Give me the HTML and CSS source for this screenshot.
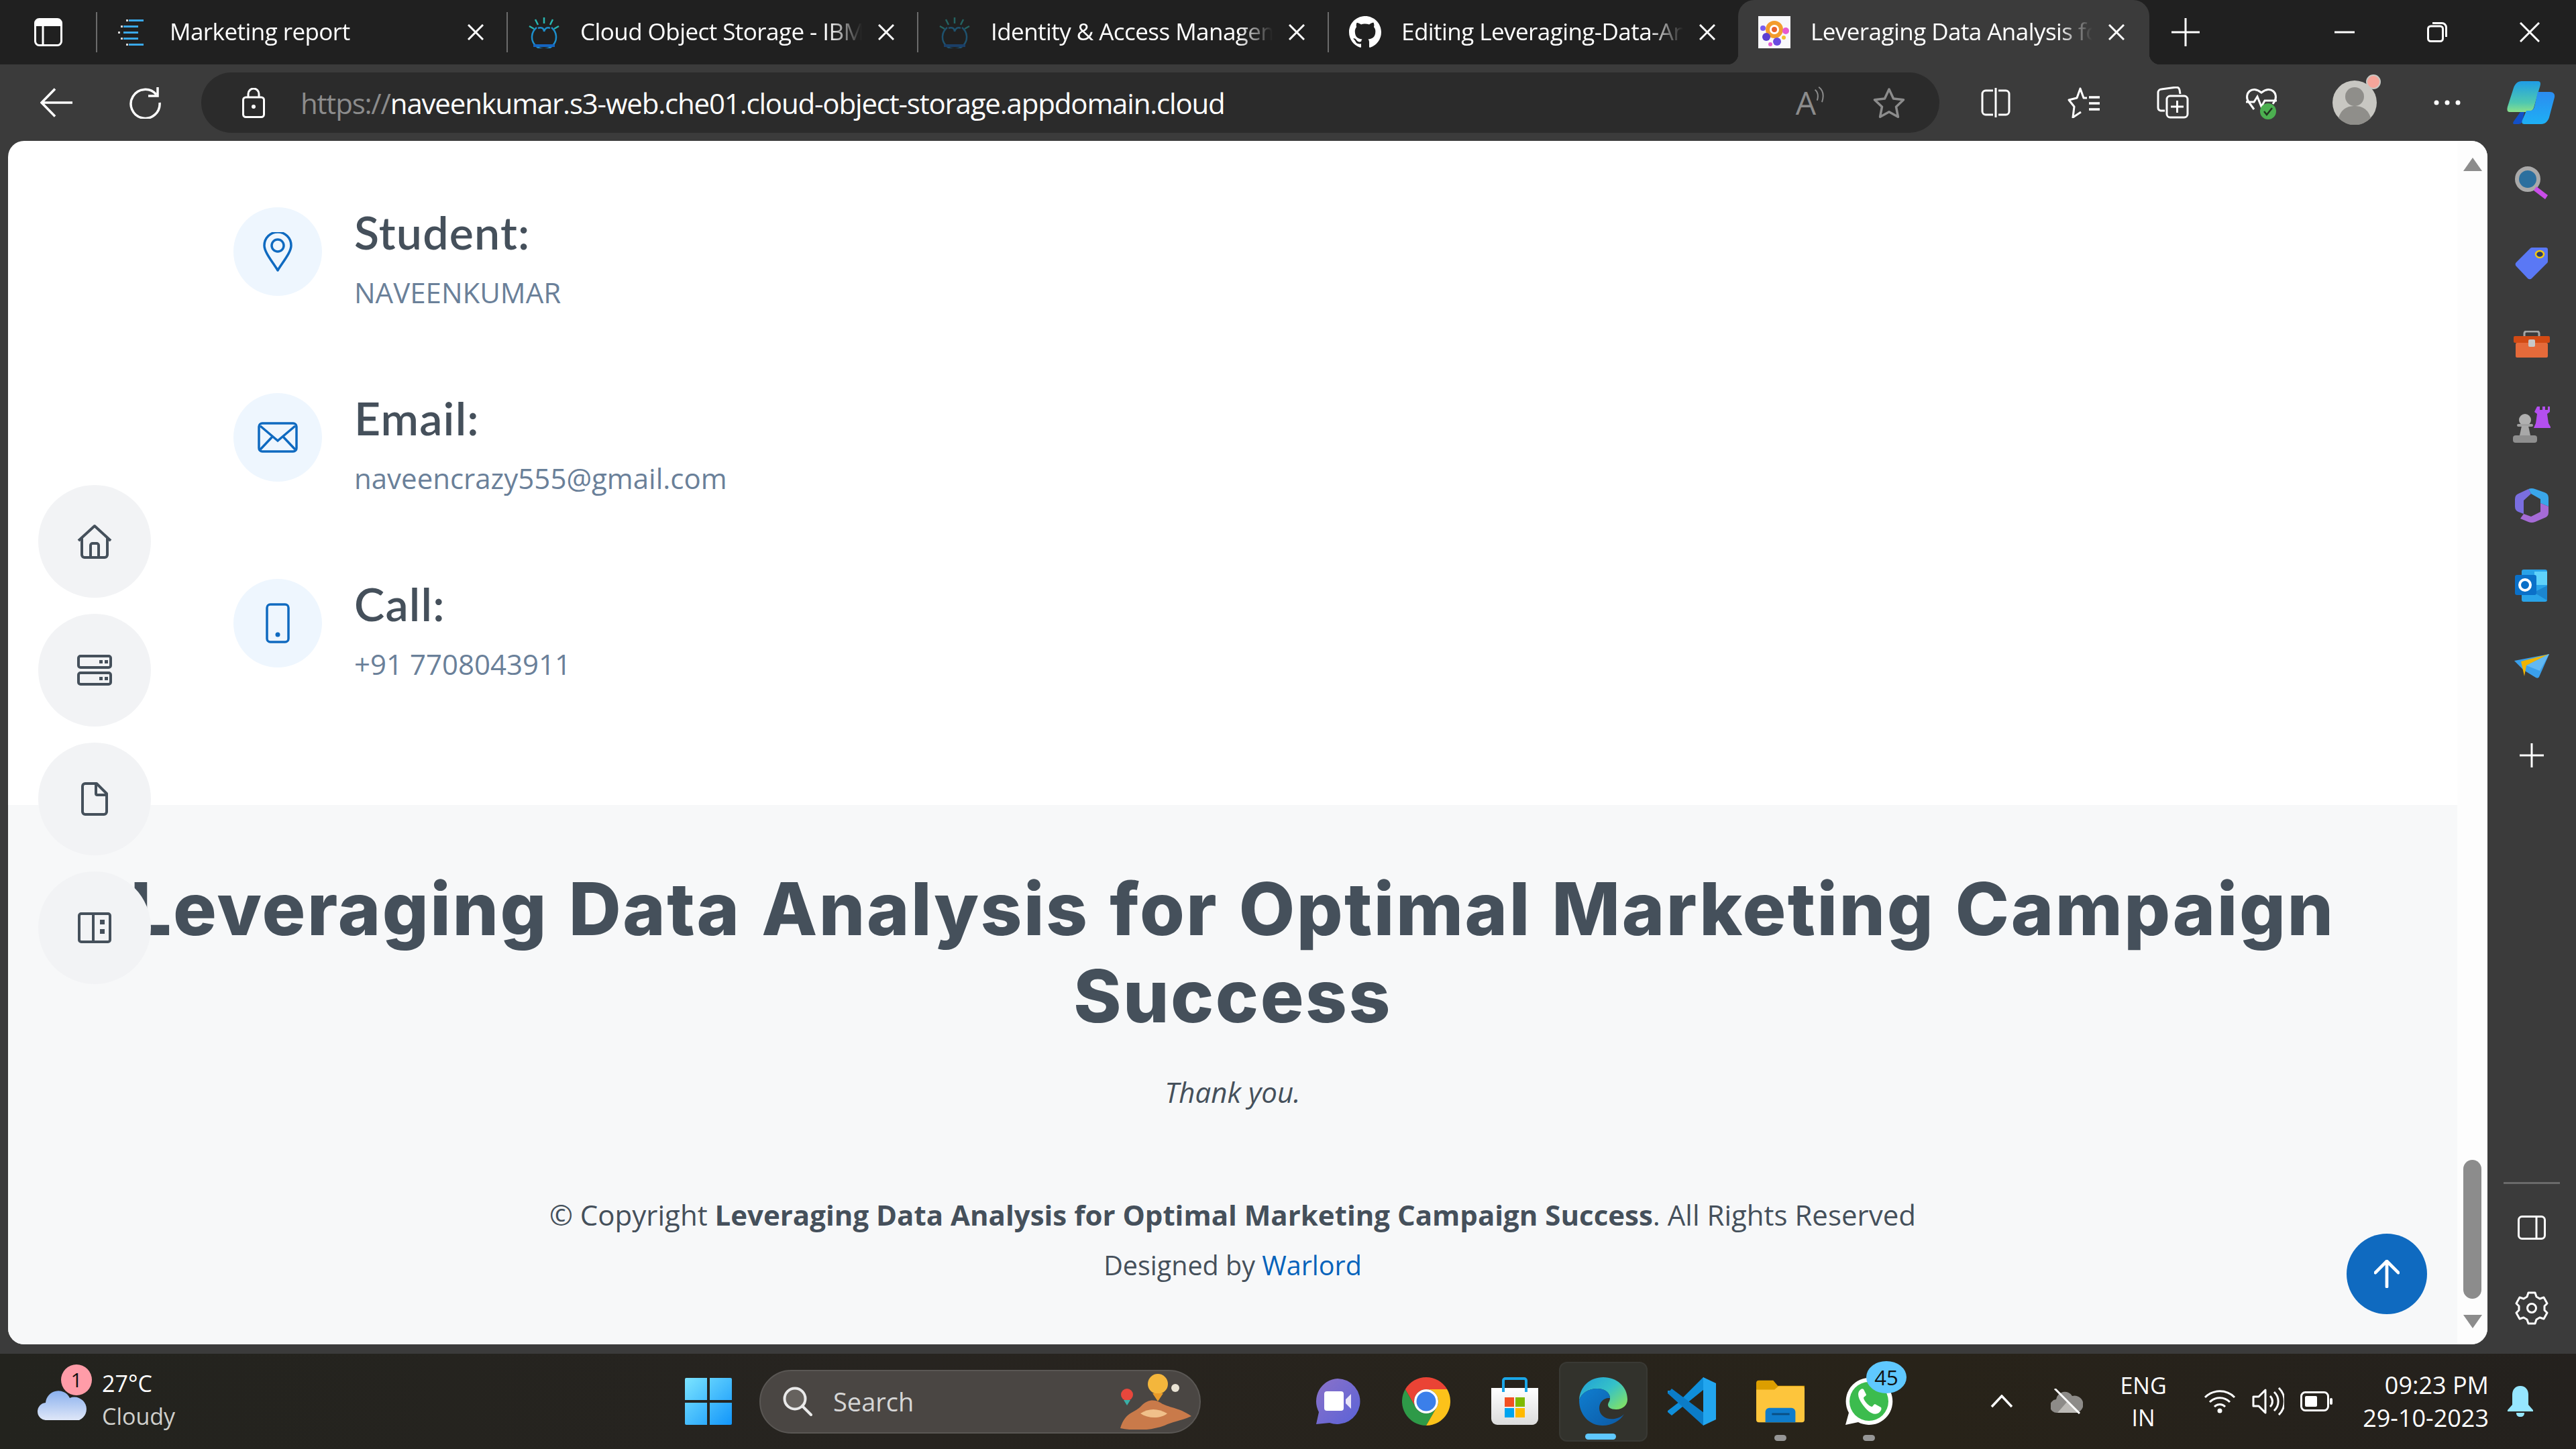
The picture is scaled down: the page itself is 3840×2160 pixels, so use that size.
FILE: index.html
```html
<!DOCTYPE html>
<html>
<head>
  <meta charset="utf-8">
  <title>Leveraging Data Analysis</title>
  <link rel="stylesheet" href="styles.css">
</head>
<body>
<div class="screen">

  <!-- tab strip -->
  <div class="tabbar">
    <div class="tabs-btn">
      <svg class="ic-tabs" viewBox="0 0 42 42"><rect x="1.500" y="1.500" width="39" height="39" rx="6" fill="none" stroke="#fff" stroke-width="3"/><path d="M1.500 8a6 6 0 0 1 6-6.500h27a6 6 0 0 1 6 6.500v4h-39z" fill="#fff"/><path d="M13 12v28" stroke="#fff" stroke-width="3"/></svg>
    </div>
    <div class="tab-sep"></div>
    <div class="tab">
      <svg class="favicon" viewBox="0 0 48 48"><g fill="#3aa8e8"><rect x="17" y="5" width="22" height="3"/><rect x="9" y="14" width="22" height="3"/><rect x="9" y="23" width="22" height="3"/><rect x="9" y="32" width="22" height="3"/><rect x="17" y="41" width="22" height="3"/></g><g fill="#d8d8d8"><rect x="13" y="5" width="3" height="3"/><rect x="5" y="14" width="3" height="3"/><rect x="1" y="23" width="3" height="3"/><rect x="5" y="32" width="3" height="3"/><rect x="13" y="41" width="3" height="3"/></g></svg>
      <span class="tab-title">Marketing report</span>
      <svg class="tab-x" viewBox="0 0 24 24"><path d="M1 1l22 22M23 1L1 23" stroke="#fff" stroke-width="3"/></svg>
    </div>
    <div class="tab-sep"></div>
    <div class="tab">
      <svg class="favicon" viewBox="0 0 48 48"><path d="M13 17a18 18 0 1 0 22 0" fill="none" stroke="#1d8ecb" stroke-width="2.500"/><path d="M15 18c5-2 9 0 9 5 1-5 5-7 9-5" fill="none" stroke="#1d8ecb" stroke-width="2.500"/><path d="M24 2v9M11 5l4 8M37 5l-4 8M2 15l7 4M46 15l-7 4" stroke="#29b6b0" stroke-width="2.500"/><path d="M8 44h32" stroke="#1565c0" stroke-width="4"/></svg>
      <span class="tab-title">Cloud Object Storage - IBM Cloud</span>
      <svg class="tab-x" viewBox="0 0 24 24"><path d="M1 1l22 22M23 1L1 23" stroke="#fff" stroke-width="3"/></svg>
    </div>
    <div class="tab-sep"></div>
    <div class="tab">
      <svg class="favicon dim" viewBox="0 0 48 48"><path d="M13 17a18 18 0 1 0 22 0" fill="none" stroke="#1d8ecb" stroke-width="2.500"/><path d="M15 18c5-2 9 0 9 5 1-5 5-7 9-5" fill="none" stroke="#1d8ecb" stroke-width="2.500"/><path d="M24 2v9M11 5l4 8M37 5l-4 8M2 15l7 4M46 15l-7 4" stroke="#29b6b0" stroke-width="2.500"/><path d="M8 44h32" stroke="#1565c0" stroke-width="4"/></svg>
      <span class="tab-title">Identity &amp; Access Management</span>
      <svg class="tab-x" viewBox="0 0 24 24"><path d="M1 1l22 22M23 1L1 23" stroke="#fff" stroke-width="3"/></svg>
    </div>
    <div class="tab-sep"></div>
    <div class="tab">
      <svg class="favicon" viewBox="0 0 16 16"><path fill="#fff" d="M8 0C3.580 0 0 3.580 0 8c0 3.540 2.290 6.530 5.470 7.590.4.070.55-.17.55-.38 0-.19-.01-.82-.01-1.490-2.010.37-2.530-.49-2.690-.94-.09-.23-.48-.94-.82-1.130-.28-.15-.68-.52-.01-.53.63-.01 1.080.58 1.230.82.72 1.210 1.870.87 2.330.66.07-.52.28-.87.51-1.070-1.780-.2-3.640-.89-3.640-3.950 0-.87.31-1.590.82-2.150-.08-.2-.36-1.020.08-2.120 0 0 .67-.21 2.200.82.64-.18 1.320-.27 2-.27.68 0 1.360.09 2 .27 1.530-1.040 2.200-.82 2.200-.82.44 1.100.16 1.920.08 2.120.51.56.82 1.270.82 2.150 0 3.070-1.870 3.750-3.650 3.950.29.25.54.73.54 1.480 0 1.070-.01 1.930-.01 2.200 0 .21.15.46.55.38A8.013 8.013 0 0 0 16 8c0-4.420-3.580-8-8-8z"/></svg>
      <span class="tab-title">Editing Leveraging-Data-Analysis</span>
      <svg class="tab-x" viewBox="0 0 24 24"><path d="M1 1l22 22M23 1L1 23" stroke="#fff" stroke-width="3"/></svg>
    </div>
    <div class="tab tab-active">
      <svg class="favicon" viewBox="0 0 48 48"><rect width="48" height="48" fill="#f8f8fb"/><circle cx="24" cy="20" r="13" fill="#f39c2d"/><circle cx="24" cy="20" r="7" fill="#fff"/><circle cx="24" cy="20" r="4" fill="#e8612c"/><circle cx="12" cy="31" r="6" fill="#5b3fd1"/><circle cx="28" cy="38" r="6" fill="#6a4be0"/><circle cx="41" cy="22" r="5" fill="#e65ad0"/><circle cx="7" cy="18" r="4" fill="#7a5cf0"/><circle cx="38" cy="32" r="3" fill="#f2c12e"/><circle cx="18" cy="42" r="3" fill="#e65ad0"/></svg>
      <span class="tab-title">Leveraging Data Analysis for Optimal</span>
      <svg class="tab-x" viewBox="0 0 24 24"><path d="M1 1l22 22M23 1L1 23" stroke="#fff" stroke-width="3"/></svg>
    </div>
    <div class="newtab">
      <svg class="ic-plus" viewBox="0 0 42 42"><path d="M0 21h42M21 0v42" stroke="#fff" stroke-width="3"/></svg>
    </div>
    <div class="winctl">
      <div class="winbtn"><svg class="ic-min" viewBox="0 0 30 4"><path d="M0 2h30" stroke="#fff" stroke-width="3"/></svg></div>
      <div class="winbtn"><svg class="ic-restore" viewBox="0 0 30 30"><rect x="1.500" y="6" width="22" height="22.500" rx="4" fill="none" stroke="#fff" stroke-width="3"/><path d="M8 1.500h14a6.500 6.500 0 0 1 6.500 6.500v14" fill="none" stroke="#fff" stroke-width="3"/></svg></div>
      <div class="winbtn"><svg class="ic-close" viewBox="0 0 30 30"><path d="M1 1l28 28M29 1L1 29" stroke="#fff" stroke-width="3"/></svg></div>
    </div>
  </div>

  <!-- address bar row -->
  <div class="toolbar">
    <div class="tool">
      <svg class="ic-back" viewBox="0 0 48 44"><path d="M22 1.500L2 22l20 20.500M2 22h46" fill="none" stroke="#fff" stroke-width="3.500"/></svg>
    </div>
    <div class="tool">
      <svg class="ic-refresh" viewBox="0 0 48 48"><path d="M41 12A21.500 21.500 0 1 0 46 24" fill="none" stroke="#fff" stroke-width="3.500"/><path d="M43 1v13H29" fill="none" stroke="#fff" stroke-width="3.500"/></svg>
    </div>
    <div class="address">
      <svg class="ic-lock" viewBox="0 0 34 45"><rect x="1.500" y="14" width="31" height="29.500" rx="4" fill="none" stroke="#fff" stroke-width="3"/><path d="M9 14V9a8 8 0 0 1 16 0v5" fill="none" stroke="#fff" stroke-width="3"/><circle cx="17" cy="28" r="3" fill="#fff"/></svg>
      <span class="url"><span class="url-scheme">https://</span>naveenkumar.s3-web.che01.cloud-object-storage.appdomain.cloud</span>
      <div class="address-right">
        <span class="read-aloud">A<svg class="ic-waves" viewBox="0 0 20 30"><path d="M2 6c5 4 7 10 4 20M9 1c8 6 10 16 6 28" fill="none" stroke="#8c8c8c" stroke-width="2.500"/></svg></span>
        <svg class="ic-star" viewBox="0 0 48 46"><path d="M24 3l6.500 14 15 1.800-11 10.400 2.900 15L24 36.800 10.600 44.200l2.900-15-11-10.400 15-1.800z" fill="none" stroke="#8c8c8c" stroke-width="3.500" stroke-linejoin="round"/></svg>
      </div>
    </div>
    <div class="tool">
      <svg class="ic-split" viewBox="0 0 44 44"><path d="M18 4H7a5 5 0 0 0-5 5v26a5 5 0 0 0 5 5h11M26 4h11a5 5 0 0 1 5 5v26a5 5 0 0 1-5 5H26" fill="none" stroke="#fff" stroke-width="3"/><path d="M22 0v44" stroke="#fff" stroke-width="3"/></svg>
    </div>
    <div class="tool">
      <svg class="ic-favs" viewBox="0 0 50 46"><path d="M29 16h-5L19 2l-5 14L2 19l8 10-2 16 12-8" fill="none" stroke="#fff" stroke-width="3" stroke-linejoin="round"/><path d="M32 15h16M32 24h16M32 33h16" stroke="#fff" stroke-width="3.500"/></svg>
    </div>
    <div class="tool">
      <svg class="ic-coll" viewBox="0 0 48 48"><path d="M12 36l-6 0a5 5 0 0 1-4-5V9a5 5 0 0 1 5-5l22-3a5 5 0 0 1 5 4l1 6" fill="none" stroke="#fff" stroke-width="3"/><rect x="15" y="14" width="31" height="32" rx="5" fill="#3b3b3b" stroke="#fff" stroke-width="3"/><path d="M30.500 21v18M21 30h19" stroke="#fff" stroke-width="3"/></svg>
    </div>
    <div class="tool">
      <svg class="ic-health" viewBox="0 0 48 50"><path d="M13 35L5 24C-3 12 10-2 24 10c14-12 27 2 19 14l-2 3" fill="none" stroke="#fff" stroke-width="3"/><path d="M1 24h12l5-8 6 15 5-9h18" fill="none" stroke="#fff" stroke-width="3"/><circle cx="34" cy="38" r="12" fill="#4caf50"/><path d="M28 38l4 5 8-10" fill="none" stroke="#21331f" stroke-width="2.500"/></svg>
    </div>
    <div class="tool tool-profile">
      <svg class="ic-avatar" viewBox="0 0 66 66"><circle cx="33" cy="33" r="33" fill="#c8c7c2"/><circle cx="33" cy="24" r="14" fill="#8f8e8a"/><path d="M9 56c4-14 14-18 24-18s20 4 24 18a33 33 0 0 1-48 0z" fill="#8f8e8a"/></svg>
      <div class="avatar-dot"></div>
    </div>
    <div class="tool tool-dots">
      <svg class="ic-dots" viewBox="0 0 40 8"><circle cx="4" cy="4" r="3.500" fill="#fff"/><circle cx="20" cy="4" r="3.500" fill="#fff"/><circle cx="36" cy="4" r="3.500" fill="#fff"/></svg>
    </div>
    <div class="tool tool-copilot">
      <svg class="ic-copilot" viewBox="0 0 72 64">
        <defs>
          <linearGradient id="cpA" x1="0" y1="0" x2="0" y2="1"><stop offset="0" stop-color="#1e9de6"/><stop offset=".7" stop-color="#4fc8b0"/><stop offset="1" stop-color="#8be08a"/></linearGradient>
          <linearGradient id="cpB" x1="0" y1="0" x2="0" y2="1"><stop offset="0" stop-color="#2b8cf0"/><stop offset="1" stop-color="#1eb0f5"/></linearGradient>
        </defs>
        <path d="M22 0h24c6 0 4 6 2 12l-8 28c-2 4-6 6-10 6H4c-4 0-4-4-3-8l9-28C12 4 16 0 22 0z" fill="url(#cpA)"/>
        <path d="M20 46h6l-3 14c-1 3-3 4-7 4H12c-4 0-3-2-2-4z" fill="#1250c8"/>
        <path d="M46 16h18c5 0 8 3 7 8l-8 30c-2 6-6 10-12 10H26c-4 0-4-3-3-6l6-14h4c5 0 7-2 8-6z" fill="url(#cpB)"/>
      </svg>
    </div>
  </div>

  <!-- page plus edge sidebar -->
  <div class="middle">
    <div class="page">
      <div class="content">
        <section class="contact">
          <div class="info">
            <div class="info-icon">
              <svg class="ic-pin" viewBox="0 0 44 59"><path d="M22 57C14 44 2 30 2 20a20 20 0 0 1 40 0c0 10-12 24-20 37z" fill="none" stroke="#0f6ac0" stroke-width="3.500" stroke-linejoin="round"/><circle cx="22" cy="20" r="9" fill="none" stroke="#0f6ac0" stroke-width="3.500"/></svg>
            </div>
            <div class="info-text">
              <h4>Student:</h4>
              <p>NAVEENKUMAR</p>
            </div>
          </div>
          <div class="info">
            <div class="info-icon">
              <svg class="ic-mail" viewBox="0 0 60 46"><rect x="2" y="2" width="56" height="42" rx="5" fill="none" stroke="#0f6ac0" stroke-width="3.500"/><path d="M4 6l26 22L56 6M4 41l18-19M56 41L38 22" fill="none" stroke="#0f6ac0" stroke-width="3.500"/></svg>
            </div>
            <div class="info-text">
              <h4>Email:</h4>
              <p>naveencrazy555@gmail.com</p>
            </div>
          </div>
          <div class="info">
            <div class="info-icon">
              <svg class="ic-phone" viewBox="0 0 36 60"><rect x="2" y="2" width="32" height="56" rx="5" fill="none" stroke="#0f6ac0" stroke-width="3.500"/><circle cx="18" cy="47" r="3.500" fill="#0f6ac0"/></svg>
            </div>
            <div class="info-text">
              <h4>Call:</h4>
              <p>+91 7708043911</p>
            </div>
          </div>
        </section>

        <footer class="footer">
          <h3>Leveraging Data Analysis for Optimal Marketing Campaign Success</h3>
          <p class="thanks">Thank you.</p>
          <div class="copyright">© Copyright <strong>Leveraging Data Analysis for Optimal Marketing Campaign Success</strong>. All Rights Reserved</div>
          <div class="credits">Designed by <a href="#">Warlord</a></div>
        </footer>

        <nav class="sidenav">
          <a class="nav-btn"><svg class="ic-home" viewBox="0 0 52 52"><path d="M2 25L26 3l24 22M7 21v25a4 4 0 0 0 4 4h30a4 4 0 0 0 4-4V21" fill="none" stroke="#45505b" stroke-width="4" stroke-linejoin="round"/><path d="M20 50V32a3 3 0 0 1 3-3h6a3 3 0 0 1 3 3v18" fill="none" stroke="#45505b" stroke-width="4"/></svg></a>
          <a class="nav-btn"><svg class="ic-hdd" viewBox="0 0 52 46"><rect x="2" y="2" width="48" height="17" rx="3" fill="none" stroke="#45505b" stroke-width="4"/><rect x="2" y="27" width="48" height="17" rx="3" fill="none" stroke="#45505b" stroke-width="4"/><path d="M33 8h5v5h-5zM41 8h5v5h-5zM33 33h5v5h-5zM41 33h5v5h-5z" fill="#45505b"/></svg></a>
          <a class="nav-btn"><svg class="ic-doc" viewBox="0 0 40 50"><path d="M6 2h17l15 15v27a4 4 0 0 1-4 4H6a4 4 0 0 1-4-4V6a4 4 0 0 1 4-4z" fill="none" stroke="#45505b" stroke-width="4" stroke-linejoin="round"/><path d="M22 2v15a2 2 0 0 0 2 2h14" fill="none" stroke="#45505b" stroke-width="4"/></svg></a>
          <a class="nav-btn"><svg class="ic-book" viewBox="0 0 50 46"><rect x="2" y="2" width="46" height="42" rx="3" fill="none" stroke="#45505b" stroke-width="4"/><path d="M23 2v42" stroke="#45505b" stroke-width="4"/><path d="M33 11h7v7h-7zM33 25h7v7h-7z" fill="#45505b"/></svg></a>
        </nav>

        <a class="back-top"><svg class="ic-up" viewBox="0 0 40 44"><path d="M2 20L20 2l18 18M20 2v40" fill="none" stroke="#fff" stroke-width="5" stroke-linecap="round" stroke-linejoin="round"/></svg></a>
      </div>

      <div class="scrollbar">
        <div class="arrow-up"></div>
        <div class="thumb"></div>
        <div class="arrow-down"></div>
      </div>
    </div>

    <aside class="edgebar">
      <div class="edge-icon">
        <svg class="ic-s1" viewBox="0 0 52 52"><circle cx="20" cy="20" r="16" fill="#2b6f9e" stroke="#a9a9a9" stroke-width="6"/><path d="M33 31l17 13-4 6-17-13z" fill="#c94de8"/></svg>
      </div>
      <div class="edge-icon">
        <svg class="ic-s2" viewBox="0 0 50 50"><path d="M26 1h20a3 3 0 0 1 3 3v18a4 4 0 0 1-2 3L25 47a4 4 0 0 1-6 0L2 29a4 4 0 0 1 0-6L23 2a4 4 0 0 1 3-1z" fill="#5a78f5"/><ellipse cx="37" cy="11" rx="6" ry="5" fill="#2b3a66" stroke="#f2c812" stroke-width="2.500"/></svg>
      </div>
      <div class="edge-icon">
        <svg class="ic-s3" viewBox="0 0 54 40"><path d="M16 8V4a3 3 0 0 1 3-3h16a3 3 0 0 1 3 3v4" fill="none" stroke="#a5a5a5" stroke-width="3"/><rect x="0" y="8" width="54" height="10" rx="2" fill="#d24a14"/><rect x="3" y="18" width="48" height="22" rx="2" fill="#e56a3a"/><rect x="22" y="13" width="10" height="11" rx="2" fill="#c8c8c8"/></svg>
      </div>
      <div class="edge-icon">
        <svg class="ic-s4" viewBox="0 0 56 54"><path d="M37 0h4v5h4V0h4v5h4V0h3v8l-4 3 2 14 4 7H32l3-7 2-14-4-3z" fill="#b44ff0" transform="translate(-1 0)"/><circle cx="18" cy="20" r="9" fill="#b0b0b0"/><rect x="6" y="26" width="24" height="4" rx="2" fill="#a0a0a0"/><path d="M13 29h10l3 14H10z" fill="#a8a8a8"/><rect x="0" y="43" width="36" height="11" rx="4" fill="#8e8e8e"/></svg>
      </div>
      <div class="edge-icon">
        <svg class="ic-s5" viewBox="0 0 50 54">
          <path d="M20 3q5-2 10 0l14 5q6 2 6 8v13L38 24V18L24 10z" fill="#3aa6ea"/>
          <path d="M0 18q0-6 5-8L20 3l4 7-11 10v20L5 37q-5-2-5-8z" fill="#7a6ee0"/>
          <path d="M13 40l11 4 14-7V24l12 5v9q0 6-6 8L30 52q-5 2-10 0L8 47z" fill="#a56bd6"/>
          <ellipse cx="25" cy="28" rx="12" ry="13" fill="#3b3b3b"/>
        </svg>
      </div>
      <div class="edge-icon">
        <svg class="ic-s6" viewBox="0 0 50 48"><rect x="10" y="0" width="38" height="48" rx="3" fill="#29a3e8"/><rect x="29" y="3" width="19" height="20" fill="#5fd2fb"/><path d="M28 34L48 24v22z" fill="#1b86d0"/><rect x="0" y="8" width="32" height="30" rx="3" fill="#0a70c8"/><ellipse cx="15" cy="23" rx="8" ry="8" fill="none" stroke="#fff" stroke-width="4"/></svg>
      </div>
      <div class="edge-icon">
        <svg class="ic-s7" viewBox="0 0 52 36"><path d="M0 10l52-10-15 34c-1 2-3 2-5 1L14 24z" fill="#3aa0ec"/><path d="M10 11L52 0 18 17l-3 16z" fill="#f0b400"/><path d="M52 0L18 17l20 8z" fill="#62b8f2"/></svg>
      </div>
      <div class="edge-icon edge-add">
        <svg class="ic-plus2" viewBox="0 0 36 36"><path d="M0 18h36M18 0v36" stroke="#fff" stroke-width="3"/></svg>
      </div>
      <div class="edge-bottom">
        <div class="edge-line"></div>
        <div class="edge-tool">
          <svg class="ic-panel" viewBox="0 0 42 36"><rect x="1.500" y="1.500" width="39" height="33" rx="5" fill="none" stroke="#fff" stroke-width="3"/><path d="M28 1.500v33" stroke="#fff" stroke-width="3"/></svg>
        </div>
        <div class="edge-tool">
          <svg class="ic-gear" viewBox="0 0 50 50"><path d="M20 2h10l2 6 5 3 6-2 5 9-4 4v6l4 4-5 9-6-2-5 3-2 6H20l-2-6-5-3-6 2-5-9 4-4v-6l-4-4 5-9 6 2 5-3z" fill="none" stroke="#fff" stroke-width="3" stroke-linejoin="round"/><circle cx="25" cy="25" r="6.500" fill="none" stroke="#fff" stroke-width="3"/></svg>
        </div>
      </div>
    </aside>
  </div>

  <div class="winstrip"></div>

  <!-- windows taskbar -->
  <div class="taskbar">
    <div class="weather">
      <svg class="ic-cloud" viewBox="0 0 74 46">
        <defs><linearGradient id="cl" x1="0" y1="0" x2="0" y2="1"><stop offset="0" stop-color="#8ab0ee"/><stop offset="1" stop-color="#dfe7f8"/></linearGradient></defs>
        <path d="M14 46a13 13 0 0 1-2-26 19 19 0 0 1 36-7 17 17 0 0 1 14 33z" fill="url(#cl)"/>
      </svg>
      <span class="weather-badge">1</span>
      <div class="weather-text">
        <span class="temp">27°C</span>
        <span class="cond">Cloudy</span>
      </div>
    </div>

    <div class="win-logo">
      <svg class="ic-win" viewBox="0 0 70 70">
        <defs><linearGradient id="wn" x1="0" y1="0" x2="1" y2="1"><stop offset="0" stop-color="#7be4ff"/><stop offset="1" stop-color="#1296fa"/></linearGradient></defs>
        <path d="M2 0h31v33H0V2a2 2 0 0 1 2-2zM37 0h31a2 2 0 0 1 2 2v31H37zM0 37h33v33H2a2 2 0 0 1-2-2zM37 37h33v31a2 2 0 0 1-2 2H37z" fill="url(#wn)"/>
      </svg>
    </div>

    <div class="searchbox">
      <svg class="ic-search" viewBox="0 0 44 44"><circle cx="18" cy="18" r="15.500" fill="#66625e" stroke="#eaeaea" stroke-width="4"/><path d="M29 29l13 13" stroke="#eaeaea" stroke-width="4" stroke-linecap="round"/></svg>
      <span class="search-label">Search</span>
      <svg class="ic-doodle" viewBox="0 0 140 84">
        <path d="M30 82c8-26 22-22 32-34 8-8 18-10 28-4 12 8 26 6 46 20-18 8-28 8-40 14-22 8-46 8-66 4z" fill="#c97a4a"/>
        <path d="M60 60c12-8 26-8 40 0-10 8-28 8-40 0z" fill="#f0c08a"/>
        <circle cx="86" cy="16" r="15" fill="#f4b63c"/><path d="M78 30l8 12 8-12z" fill="#e89b2a"/>
        <circle cx="40" cy="32" r="9" fill="#e8473c"/><path d="M35 40l5 8 5-8z" fill="#38b0a8"/>
        <circle cx="112" cy="22" r="6" fill="#e9e3d4"/>
      </svg>
    </div>

    <div class="apps">
      <div class="app">
        <svg class="ic-app-meet" viewBox="0 0 68 68">
          <defs><linearGradient id="mt" x1="0" y1="0" x2="1" y2="1"><stop offset="0" stop-color="#8b72c8"/><stop offset="1" stop-color="#5a62d8"/></linearGradient></defs>
          <path d="M34 0a34 34 0 1 1-12 66L2 68l4-18A34 34 0 0 1 34 0z" fill="url(#mt)"/>
          <rect x="14" y="19" width="29" height="29" rx="4" fill="#fff"/><path d="M46 31l8-8v22l-8-8z" fill="#e8e4f8"/>
        </svg>
      </div>
      <div class="app">
        <svg class="ic-app" viewBox="0 0 72 72">
          <path d="M36 0a36 36 0 0 1 31.200 18H36a18 18 0 0 0-15.600 27L4.800 18A36 36 0 0 1 36 0z" fill="#ea4335"/>
          <path d="M4.800 18l15.600 27a18 18 0 0 0 31.200 0L36 72A36 36 0 0 1 4.800 18z" fill="#2e9a48"/>
          <path d="M67.200 18H36a18 18 0 0 1 15.600 27L36 72a36 36 0 0 0 31.200-54z" fill="#fcc21a"/>
          <circle cx="36" cy="36" r="18" fill="#fff"/><circle cx="36" cy="36" r="14.500" fill="#3b7fea"/>
        </svg>
      </div>
      <div class="app">
        <svg class="ic-app" viewBox="0 0 72 72">
          <defs><linearGradient id="st" x1="0" y1="0" x2="0" y2="1"><stop offset="0" stop-color="#ffffff"/><stop offset="1" stop-color="#dcdcdc"/></linearGradient></defs>
          <path d="M1 16h70v46a9 9 0 0 1-9 9H10a9 9 0 0 1-9-9z" fill="url(#st)"/>
          <path d="M19 22V5a3 3 0 0 1 3-3h28a3 3 0 0 1 3 3v17" fill="none" stroke="#1aa7e8" stroke-width="4"/>
          <rect x="21" y="30" width="14" height="14" fill="#f25022"/><rect x="37" y="30" width="14" height="14" fill="#7fba00"/><rect x="21" y="46" width="14" height="14" fill="#00a4ef"/><rect x="37" y="46" width="14" height="14" fill="#ffb900"/>
        </svg>
      </div>
      <div class="app app-active">
        <svg class="ic-app" viewBox="0 0 72 72">
          <defs>
            <linearGradient id="eg1" x1="0" y1="0" x2="1" y2=".8"><stop offset="0" stop-color="#1f9fd8"/><stop offset=".55" stop-color="#35c1c8"/><stop offset="1" stop-color="#7ee06a"/></linearGradient>
            <linearGradient id="eg2" x1="0" y1="0" x2="1" y2="1"><stop offset="0" stop-color="#0f7ed0"/><stop offset="1" stop-color="#0c59a4"/></linearGradient>
          </defs>
          <path d="M0 34C1 14 16 0 36 0c20 0 36 14 36 33 0 8-6 15-17 15-8 0-12-3-12-7 0-3 3-5 3-10 0-8-8-14-19-14C14 17 3 24 0 34z" fill="url(#eg1)"/>
          <path d="M0 34C3 24 14 17 27 17c11 0 19 6 19 14-9-1-16 6-16 15 0 11 10 18 23 16 5-1 10-3 14-7-6 10-18 17-32 17C15 72 0 56 0 34z" fill="url(#eg2)"/>
        </svg>
      </div>
      <div class="app">
        <svg class="ic-app" viewBox="0 0 72 72">
          <path d="M53 0L22 31 8 20l-8 0v4l17 13L0 50v2l6 5 52-42V4z" fill="#0f8fdb"/>
          <path d="M0 24l6-7 52 39v12l-5 4z" fill="#0b7cc8"/>
          <path d="M53 0l19 9v54l-19 9z" fill="#22a6ef"/>
        </svg>
      </div>
      <div class="app app-open">
        <svg class="ic-app" viewBox="0 0 74 64">
          <path d="M0 4a4 4 0 0 1 4-4h22l7 8h41v10H0z" fill="#dc9e00"/>
          <path d="M0 14h28l6-5h36a4 4 0 0 1 4 4v47a4 4 0 0 1-4 4H4a4 4 0 0 1-4-4z" fill="#fdc53c"/>
          <path d="M14 64V48a6 6 0 0 1 6-6h34a6 6 0 0 1 6 6v16z" fill="#0f7ccb"/><rect x="24" y="50" width="27" height="3" fill="#0a4f84"/>
        </svg>
      </div>
      <div class="app app-open">
        <svg class="ic-app" viewBox="0 0 72 72">
          <path d="M36 1a35 35 0 1 1-16 66L1 71l5-18A35 35 0 0 1 36 1z" fill="#fff"/>
          <circle cx="36" cy="36" r="29" fill="#3cbc4e"/>
          <path d="M24 18c-6 4-5 12 2 22s15 17 23 14c6-3 6-8 5-9l-9-5c-2 0-3 4-5 4-4-1-11-8-12-13 0-2 4-3 4-5l-4-8c-1-1-3-1-4 0z" fill="#fff"/>
        </svg>
        <span class="wa-badge">45</span>
      </div>
    </div>

    <div class="tray">
      <svg class="ic-chev" viewBox="0 0 34 20"><path d="M2 18L17 2l15 16" fill="none" stroke="#fff" stroke-width="3.500"/></svg>
      <svg class="ic-od" viewBox="0 0 48 38"><path d="M10 36a10 10 0 0 1-2-20 13 13 0 0 1 24-5 11 11 0 0 1 7 25z" fill="#8d8b88"/><path d="M10 36l14-16 18 16z" fill="#bcbab6"/><path d="M6 0l37 37" stroke="#fff" stroke-width="3"/></svg>
      <div class="lang"><span>ENG</span><span>IN</span></div>
      <svg class="ic-wifi" viewBox="0 0 48 36"><path d="M2 12a31 31 0 0 1 44 0M9 19a21 21 0 0 1 30 0M16 26a11 11 0 0 1 16 0" fill="none" stroke="#fff" stroke-width="3"/><circle cx="24" cy="32" r="3.500" fill="#fff"/></svg>
      <svg class="ic-vol" viewBox="0 0 48 42"><path d="M2 14h8L20 4v34L10 28H2z" fill="none" stroke="#fff" stroke-width="3" stroke-linejoin="round"/><path d="M27 13a11 11 0 0 1 0 16M33 7a19 19 0 0 1 0 28M40 1a28 28 0 0 1 0 40" fill="none" stroke="#fff" stroke-width="3"/></svg>
      <svg class="ic-batt" viewBox="0 0 48 30"><rect x="1.500" y="1.500" width="40" height="27" rx="6" fill="none" stroke="#fff" stroke-width="3"/><rect x="7" y="7" width="18" height="16" rx="2" fill="#fff"/><rect x="44" y="10" width="4" height="10" rx="2" fill="#fff"/></svg>
      <div class="clock"><span>09:23 PM</span><span>29-10-2023</span></div>
      <svg class="ic-bell" viewBox="0 0 40 46"><path d="M20 0c8 0 12 6 12 13v15l7 8v2H1v-2l7-8V13C8 6 12 0 20 0z" fill="#96e6ff"/><path d="M14 40h12c0 4-2 6-6 6s-6-2-6-6z" fill="#96e6ff"/></svg>
    </div>
  </div>

</div>
</body>
</html>
```

FILE: styles.css
```css
* {
  box-sizing: border-box;
}

html, body {
  margin: 0;
  padding: 0;
  background: #202020;
}

svg {
  display: block;
  flex: none;
}

.screen {
  width: 3840px;
  height: 2160px;
  display: flex;
  flex-direction: column;
  overflow: hidden;
  font-family: "Open Sans", "Noto Sans", sans-serif;
}

/* tab strip */
.tabbar {
  height: 96px;
  flex: none;
  display: flex;
  align-items: center;
  background: #202020;
}

.tabs-btn {
  width: 143px;
  height: 96px;
  display: flex;
  align-items: center;
  padding-left: 51px;
}

.ic-tabs {
  width: 42px;
  height: 42px;
}

.tab-sep {
  width: 2px;
  height: 60px;
  background: #6b6b6b;
  flex: none;
}

.tab {
  width: 610px;
  height: 96px;
  flex: none;
  display: flex;
  align-items: center;
  padding-left: 30px;
  position: relative;
}

.favicon {
  width: 48px;
  height: 48px;
  margin-right: 30px;
}

.dim {
  opacity: .45;
}

.tab-title {
  width: 420px;
  margin-top: -3px;
  color: #fff;
  font-size: 35px;
  letter-spacing: -.55px;
  white-space: nowrap;
  overflow: hidden;
  -webkit-mask-image: linear-gradient(to right, #000 88%, transparent 100%);
  mask-image: linear-gradient(to right, #000 88%, transparent 100%);
}

.tab-x {
  width: 24px;
  height: 24px;
  margin-left: 24px;
}

.tab-active {
  width: 613px;
  background: #3b3b3b;
  border-radius: 24px 24px 0 0;
}

.tab-active::before,
.tab-active::after {
  content: "";
  position: absolute;
  bottom: 0;
  width: 16px;
  height: 16px;
}

.tab-active::before {
  left: -16px;
  background: radial-gradient(circle at 0 0, transparent 16px, #3b3b3b 16.5px);
}

.tab-active::after {
  right: -16px;
  background: radial-gradient(circle at 100% 0, transparent 16px, #3b3b3b 16.5px);
}

.newtab {
  width: 108px;
  display: flex;
  justify-content: center;
}

.ic-plus {
  width: 42px;
  height: 42px;
}

.winctl {
  margin-left: auto;
  display: flex;
}

.winbtn {
  width: 138px;
  display: flex;
  justify-content: center;
  align-items: center;
}

.ic-min {
  width: 30px;
  height: 4px;
}

.ic-restore,
.ic-close {
  width: 30px;
  height: 30px;
}

/* address row */
.toolbar {
  height: 114px;
  flex: none;
  display: flex;
  align-items: center;
  padding-left: 18px;
  background: #3b3b3b;
}

.tool {
  width: 132px;
  height: 90px;
  flex: none;
  display: flex;
  align-items: center;
  justify-content: center;
}

.tool-profile {
  position: relative;
  margin-left: 7px;
}

.tool-dots {
  margin-left: 6px;
}

.tool-copilot {
  margin-left: -7px;
}

.ic-back {
  width: 48px;
  height: 44px;
}

.ic-refresh {
  width: 48px;
  height: 48px;
}

.address {
  width: 2591px;
  height: 90px;
  margin: 0 18px;
  flex: none;
  display: flex;
  align-items: center;
  padding-left: 61px;
  background: #2b2b2b;
  border-radius: 45px;
}

.ic-lock {
  width: 34px;
  height: 45px;
}

.url {
  margin-left: 53px;
  color: #fff;
  font-size: 42px;
  letter-spacing: -1.18px;
  white-space: nowrap;
}

.url-scheme {
  color: #8c8c8c;
}

.address-right {
  margin-left: auto;
  display: flex;
  align-items: center;
  padding-right: 51px;
}

.read-aloud {
  display: flex;
  align-items: flex-start;
  color: #8c8c8c;
  font-size: 48px;
  line-height: 50px;
  margin-right: 72px;
}

.ic-waves {
  width: 16px;
  height: 26px;
  margin-left: -3px;
}

.ic-star {
  width: 48px;
  height: 46px;
}

.ic-split {
  width: 44px;
  height: 44px;
}

.ic-favs {
  width: 50px;
  height: 46px;
}

.ic-coll {
  width: 48px;
  height: 48px;
}

.ic-health {
  width: 48px;
  height: 50px;
}

.ic-avatar {
  width: 66px;
  height: 66px;
}

.avatar-dot {
  position: absolute;
  left: 83px;
  top: 3px;
  width: 22px;
  height: 22px;
  border-radius: 50%;
  background: #f5a59a;
  border: 2px solid #c8c7c2;
}

.ic-dots {
  width: 40px;
  height: 8px;
}

.ic-copilot {
  width: 72px;
  height: 64px;
}

/* page area */
.middle {
  height: 1794px;
  flex: none;
  display: flex;
  padding-left: 12px;
  background: #3b3b3b;
}

.page {
  width: 3696px;
  height: 1794px;
  flex: none;
  display: flex;
  background: #fff;
  border-radius: 24px;
  overflow: hidden;
}

.content {
  width: 3651px;
  flex: none;
  display: flex;
  flex-direction: column;
  position: relative;
}

.contact {
  height: 990px;
  flex: none;
  padding: 99px 0 0 336px;
}

.info {
  height: 277px;
  display: flex;
}

.info-icon {
  width: 132px;
  height: 132px;
  flex: none;
  display: flex;
  align-items: center;
  justify-content: center;
  border-radius: 50%;
  background: #eef6fe;
}

.info-text {
  margin-left: 48px;
}

.info-text h4 {
  margin: -3px 0 0;
  font-family: "Lato", "Open Sans", sans-serif;
  font-weight: 600;
  font-size: 68px;
  letter-spacing: 1.2px;
  line-height: 80px;
  color: #45505b;
}

.info-text p {
  margin: 20px 0 0;
  font-size: 42px;
  line-height: 60px;
  color: #6a8099;
}

.ic-pin {
  width: 44px;
  height: 59px;
}

.ic-mail {
  width: 60px;
  height: 46px;
}

.ic-phone {
  width: 36px;
  height: 60px;
}

.footer {
  flex: 1;
  background: #f7f8f9;
  color: #45505b;
  text-align: center;
  padding: 90px 0 0;
}

.footer h3 {
  margin: 0;
  padding: 0 100px;
  font-family: "Inter", "Lato", sans-serif;
  font-weight: 800;
  font-size: 108px;
  letter-spacing: 2.5px;
  word-spacing: 4.5px;
  line-height: 130px;
  color: #45505b;
}

.thanks {
  margin: 48px 0 0;
  font-style: italic;
  font-size: 42px;
  line-height: 60px;
}

.copyright {
  margin-top: 122px;
  font-size: 42px;
  line-height: 62px;
}

.credits {
  margin-top: 13px;
  font-size: 39.5px;
  line-height: 62px;
}

.credits a {
  color: #0563bb;
  text-decoration: none;
}

/* floating nav over the page */
.sidenav {
  position: absolute;
  left: 45px;
  top: 513px;
  display: flex;
  flex-direction: column;
  gap: 24px;
}

.nav-btn {
  width: 168px;
  height: 168px;
  display: flex;
  align-items: center;
  justify-content: center;
  border-radius: 50%;
  background: #f2f3f5;
}

.ic-home {
  width: 52px;
  height: 52px;
}

.ic-hdd {
  width: 52px;
  height: 46px;
}

.ic-doc {
  width: 40px;
  height: 50px;
}

.ic-book {
  width: 50px;
  height: 46px;
}

.back-top {
  position: absolute;
  left: 3486px;
  top: 1629px;
  width: 120px;
  height: 120px;
  display: flex;
  align-items: center;
  justify-content: center;
  border-radius: 50%;
  background: #0f6ac0;
}

.ic-up {
  width: 38px;
  height: 42px;
}

.scrollbar {
  width: 45px;
  flex: none;
  display: flex;
  flex-direction: column;
  align-items: center;
  background: #fdfdfd;
  padding: 25px 0 24px;
}

.arrow-up,
.arrow-down {
  width: 0;
  height: 0;
  border-left: 14px solid transparent;
  border-right: 14px solid transparent;
}

.arrow-up {
  border-bottom: 20px solid #8c8c8c;
}

.arrow-down {
  margin-top: 24px;
  border-top: 20px solid #8c8c8c;
}

.thumb {
  width: 27px;
  height: 207px;
  margin-top: auto;
  border-radius: 14px;
  background: #8c8c8c;
}

/* edge sidebar */
.edgebar {
  flex: 1;
  display: flex;
  flex-direction: column;
  align-items: center;
  padding-top: 3px;
}

.edge-icon {
  width: 100%;
  height: 120px;
  flex: none;
  display: flex;
  align-items: center;
  justify-content: center;
}

.edge-add {
  margin-top: 13px;
}

.ic-s1 {
  width: 52px;
  height: 52px;
}

.ic-s2 {
  width: 50px;
  height: 50px;
}

.ic-s3 {
  width: 54px;
  height: 40px;
}

.ic-s4 {
  width: 56px;
  height: 54px;
}

.ic-s5 {
  width: 50px;
  height: 54px;
}

.ic-s6 {
  width: 50px;
  height: 48px;
}

.ic-s7 {
  width: 52px;
  height: 36px;
}

.ic-plus2 {
  width: 36px;
  height: 36px;
}

.edge-bottom {
  margin-top: auto;
  margin-bottom: -6px;
  width: 100%;
  display: flex;
  flex-direction: column;
  align-items: center;
}

.edge-line {
  width: 84px;
  height: 3px;
  margin-bottom: 5px;
  background: #6a6a6a;
}

.edge-tool {
  width: 100%;
  height: 120px;
  flex: none;
  display: flex;
  align-items: center;
  justify-content: center;
}

.ic-panel {
  width: 42px;
  height: 36px;
}

.ic-gear {
  width: 50px;
  height: 50px;
}

.winstrip {
  height: 14px;
  flex: none;
  background: #3b3b3b;
}

/* taskbar */
.taskbar {
  flex: 1;
  display: flex;
  align-items: center;
  background: linear-gradient(to right, #23231e 0%, #272420 35%, #282319 75%, #24211e 100%);
  position: relative;
  color: #fff;
}

.weather {
  width: 1021px;
  display: flex;
  align-items: center;
  padding-left: 56px;
  flex: none;
}

.ic-cloud {
  width: 74px;
  height: 46px;
  margin-top: 10px;
}

.weather-badge {
  position: absolute;
  left: 91px;
  top: 16px;
  width: 46px;
  height: 46px;
  border-radius: 50%;
  background: #ff9ca8;
  color: #111;
  font-size: 30px;
  line-height: 46px;
  text-align: center;
}

.weather-text {
  margin: -4px 0 0 22px;
  display: flex;
  flex-direction: column;
  font-size: 34px;
  line-height: 49px;
}

.cond {
  color: #cfcfcb;
}

.win-logo {
  width: 111px;
  flex: none;
}

.ic-win {
  width: 70px;
  height: 70px;
}

.searchbox {
  width: 658px;
  height: 95px;
  flex: none;
  display: flex;
  align-items: center;
  padding-left: 33px;
  border-radius: 48px;
  background: #4a4643;
  border: 2px solid #5a5754;
  position: relative;
}

.ic-search {
  width: 44px;
  height: 44px;
}

.search-label {
  margin-left: 31px;
  color: #d6d6d6;
  font-size: 38px;
}

.ic-doodle {
  margin-left: auto;
  margin-right: 8px;
  width: 140px;
  height: 84px;
}

.apps {
  margin-left: 138px;
  display: flex;
  flex: none;
}

.app {
  width: 132px;
  height: 119px;
  flex: none;
  display: flex;
  align-items: center;
  justify-content: center;
  position: relative;
}

.ic-app-meet {
  width: 68px;
  height: 68px;
}

.ic-app {
  width: 72px;
  height: 72px;
}

.app-active {
  background: #32322c;
  border: 2px solid #393934;
  border-radius: 12px;
}

.app-active::after,
.app-open::after {
  content: "";
  position: absolute;
  bottom: 1px;
  height: 9px;
  border-radius: 5px;
}

.app-active::after {
  left: 37px;
  width: 46px;
  background: #5fc8ff;
}

.app-open::after {
  left: 57px;
  width: 18px;
  background: #969696;
}

.wa-badge {
  position: absolute;
  left: 62px;
  top: -1px;
  width: 60px;
  height: 48px;
  border-radius: 50%;
  background: #5fc8ff;
  color: #111;
  font-size: 31px;
  line-height: 48px;
  text-align: center;
}

.tray {
  flex: 1;
  display: flex;
  align-items: center;
  padding-left: 115px;
}

.ic-chev {
  width: 34px;
  height: 20px;
}

.ic-od {
  width: 48px;
  height: 38px;
  margin-left: 56px;
}

.lang {
  width: 68px;
  margin-left: 56px;
  display: flex;
  flex-direction: column;
  align-items: center;
  font-size: 34px;
  line-height: 48px;
}

.ic-wifi {
  width: 48px;
  height: 36px;
  margin-left: 56px;
}

.ic-vol {
  width: 48px;
  height: 42px;
  margin-left: 24px;
}

.ic-batt {
  width: 48px;
  height: 30px;
  margin-left: 24px;
}

.clock {
  width: 230px;
  margin-left: 3px;
  display: flex;
  flex-direction: column;
  align-items: flex-end;
  font-size: 36px;
  line-height: 49px;
}

.ic-bell {
  width: 40px;
  height: 46px;
  margin-left: 27px;
}
```
